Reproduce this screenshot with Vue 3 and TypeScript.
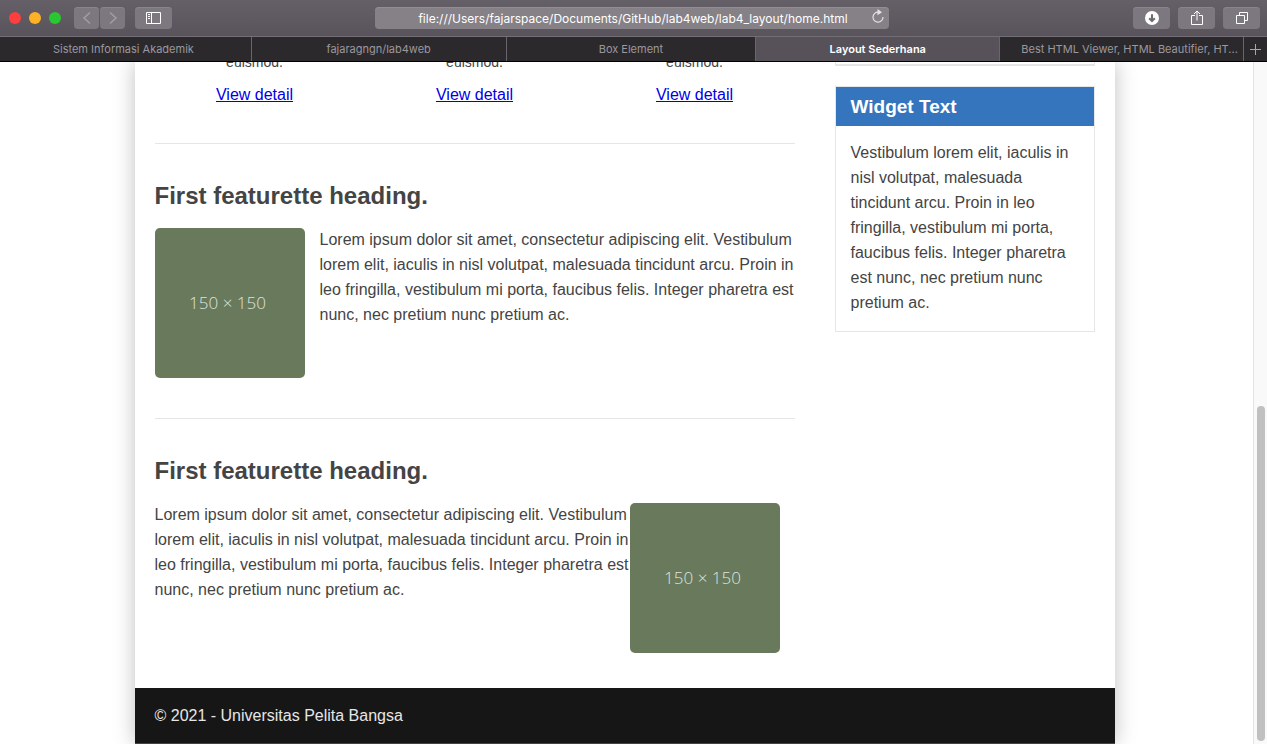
<script setup lang="ts">
import { ref } from 'vue'

const address = ref('file:///Users/fajarspace/Documents/GitHub/lab4web/lab4_layout/home.html')

const tabs: string[] = [
  'Sistem Informasi Akademik',
  'fajaragngn/lab4web',
  'Box Element',
  'Layout Sederhana',
  'Best HTML Viewer, HTML Beautifier, HT...',
]
const activeTab = ref(3)

const boxes: string[] = ['euismod.', 'euismod.', 'euismod.']

interface Featurette {
  title: string
  text: string
  imageRight: boolean
}

const lorem =
  'Lorem ipsum dolor sit amet, consectetur adipiscing elit. Vestibulum lorem elit, iaculis in nisl volutpat, malesuada tincidunt arcu. Proin in leo fringilla, vestibulum mi porta, faucibus felis. Integer pharetra est nunc, nec pretium nunc pretium ac.'

const featurettes: Featurette[] = [
  { title: 'First featurette heading.', text: lorem, imageRight: false },
  { title: 'First featurette heading.', text: lorem, imageRight: true },
]
</script>

<template>
  <div class="browser">
    <header class="toolbar">
      <div class="tools">
        <div class="lights">
          <button class="light close" aria-label="Close window"></button>
          <button class="light minimise" aria-label="Minimise window"></button>
          <button class="light zoom" aria-label="Zoom window"></button>
        </div>
        <div class="history">
          <button class="tool narrow" aria-label="Back">
            <svg width="10" height="14" viewBox="0 0 10 14"><path d="M8 1.5 2 7l6 5.500" /></svg>
          </button>
          <button class="tool narrow" aria-label="Forward">
            <svg width="10" height="14" viewBox="0 0 10 14"><path d="M2 1.5 8 7l-6 5.500" /></svg>
          </button>
        </div>
        <button class="tool" aria-label="Show sidebar">
          <svg width="15" height="12" viewBox="0 0 15 12">
            <path d="M.5.5h14v11H.5zM5.500.5v11M2 2.500h2M2 4.500h2M2 6.500h2" />
          </svg>
        </button>
      </div>

      <div class="address">
        <input v-model="address" type="text" aria-label="Address" spellcheck="false" />
        <button class="reload" aria-label="Reload page">
          <svg width="14" height="16" viewBox="0 0 14 16">
            <path d="M7.500 3.200A5 5 0 1 0 12 8" />
            <path class="solid" d="M6.500 0v6.200l4.500-3z" />
          </svg>
        </button>
      </div>

      <div class="tools end">
        <button class="tool" aria-label="Downloads">
          <svg width="14" height="14" viewBox="0 0 14 14">
            <circle class="disc" cx="7" cy="7" r="7" />
            <path class="arrow" d="M7 3.200v6.500M4.200 7.200 7 10l2.800-2.800" />
          </svg>
        </button>
        <button class="tool" aria-label="Share">
          <svg width="12" height="16" viewBox="0 0 12 16">
            <path d="M4 5.500H.5v9h11v-9H8M6 10.500V1.200M3 4l3-3 3 3" />
          </svg>
        </button>
        <button class="tool" aria-label="Show all tabs">
          <svg width="12" height="12" viewBox="0 0 12 12">
            <path d="M.5 3.500h8v8h-8zM3.500 3.500v-3h8v8h-3" />
          </svg>
        </button>
      </div>
    </header>

    <nav class="tabs" aria-label="Tabs">
      <button
        v-for="(tab, i) in tabs"
        :key="tab"
        class="tab"
        :class="{ active: i === activeTab }"
        @click="activeTab = i"
      >
        <span>{{ tab }}</span>
      </button>
      <button class="add" aria-label="New tab">
        <svg width="11" height="11" viewBox="0 0 11 11"><path d="M5.500 0v11M0 5.500h11" /></svg>
      </button>
    </nav>

    <div class="viewport">
      <div class="page">
        <div class="container">
          <div class="columns">
            <main class="main">
              <div class="boxes">
                <div v-for="(box, i) in boxes" :key="i" class="box">
                  <p>{{ box }}</p>
                  <a href="#">View detail</a>
                </div>
              </div>
              <template v-for="(item, i) in featurettes" :key="i">
                <hr />
                <article class="featurette">
                  <h2>{{ item.title }}</h2>
                  <div class="row" :class="{ reverse: item.imageRight }">
                    <div class="thumb" role="img" aria-label="150 × 150">150 × 150</div>
                    <p>{{ item.text }}</p>
                  </div>
                </article>
              </template>
            </main>

            <aside class="sidebar">
              <div class="widget previous"></div>
              <section class="widget">
                <h3>Widget Text</h3>
                <p>
                  Vestibulum lorem elit, iaculis in nisl volutpat, malesuada tincidunt arcu. Proin in
                  leo fringilla, vestibulum mi porta, faucibus felis. Integer pharetra est nunc, nec
                  pretium nunc pretium ac.
                </p>
              </section>
            </aside>
          </div>
          <footer class="footer">
            <p>© 2021 - Universitas Pelita Bangsa</p>
          </footer>
        </div>
      </div>
      <div class="scrollbar"><div class="thumb-bar"></div></div>
    </div>
  </div>
</template>

<style>
body {
  margin: 0;
}
</style>

<style scoped>
* {
  box-sizing: border-box;
}

.browser {
  display: flex;
  flex-direction: column;
  height: 100vh;
  overflow: hidden;
  background: #fff;
  font-family: Inter, 'Liberation Sans', sans-serif;
}

button {
  margin: 0;
  padding: 0;
  border: 0;
  font: inherit;
}

svg {
  display: block;
  fill: none;
  stroke: #fff;
}

/* Window toolbar */
.toolbar {
  display: grid;
  flex: none;
  grid-template-columns: 1fr minmax(0, 514px) 1fr;
  align-items: center;
  height: 36px;
  padding-right: 3px;
  background: linear-gradient(#655f67, #59545b);
}

.tools {
  display: flex;
  align-items: center;
  padding-left: 9px;
}

.tools.end {
  justify-content: flex-end;
  gap: 8px;
  padding: 0 4px 0 0;
}

.lights {
  display: flex;
  gap: 8px;
  margin-right: 13px;
}

.light {
  width: 12px;
  height: 12px;
  border-radius: 50%;
}

.close {
  background: #fc3f3f;
}

.minimise {
  background: #fdb125;
}

.zoom {
  background: #29c732;
}

.history {
  display: flex;
  gap: 1px;
  margin-right: 10px;
}

.tool {
  display: flex;
  align-items: center;
  justify-content: center;
  width: 37px;
  height: 22px;
  border-radius: 4px;
  background: #7d7880;
  box-shadow: inset 0 1px 0 #89848b;
}

.tool.narrow {
  width: 25px;
}

.narrow svg {
  stroke: #a29da4;
  stroke-width: 1.500;
}

.disc {
  fill: #fff;
  stroke: none;
}

.arrow {
  stroke: #6f6a71;
  stroke-width: 2;
}

.address {
  display: flex;
  align-items: center;
  height: 22px;
  padding: 0 4px 0 20px;
  border-radius: 4px;
  background: #858187;
  box-shadow: inset 0 1px 0 #918d93;
}

.address input {
  flex: 1;
  min-width: 0;
  padding: 2px 0 0;
  border: 0;
  outline: 0;
  background: none;
  color: #fff;
  font: 400 12px/20px Inter, 'Liberation Sans', sans-serif;
  text-align: center;
}

.reload {
  padding-bottom: 2px;
  background: none;
}

.reload svg {
  stroke: #e4e2e5;
  stroke-width: 1.200;
}

.reload .solid {
  fill: #e4e2e5;
  stroke: none;
}

/* Tab strip */
.tabs {
  display: flex;
  flex: none;
  height: 26px;
  border-top: 1px solid #736e75;
  border-bottom: 1px solid #000;
  background: #2c292d;
}

.tab {
  flex: 252 1 0;
  min-width: 0;
  border-right: 1px solid #69656b;
  background: #2c292d;
  color: #9b989c;
  font-size: 11px;
  line-height: 22px;
  text-align: center;
}

.tab:nth-child(2) {
  flex-grow: 255;
}

.tab:nth-child(3) {
  flex-grow: 250;
}

.tab:nth-child(4),
.tab:nth-child(5) {
  flex-grow: 244;
}

.tab span {
  display: block;
  overflow: hidden;
  padding: 0 8px;
  text-overflow: ellipsis;
  white-space: nowrap;
}

.tab:first-child span {
  padding: 0 12px 0 8px;
}

.tab:nth-child(5) span {
  padding: 0 4px 0 20px;
}

.tab.active {
  background: #57525a;
  color: #fff;
  font-weight: 600;
}

.add {
  display: flex;
  align-items: center;
  justify-content: center;
  width: 23px;
  background: #2c292d;
}

.add svg {
  stroke: #aaa7ab;
}

/* Web page */
.viewport {
  display: flex;
  flex: 1;
  min-height: 0;
  overflow: hidden;
}

.page {
  flex: 1;
  min-width: 0;
  padding-right: 4px;
  color: #444;
  font: 16px/25px 'Liberation Sans', Arial, sans-serif;
}

.container {
  display: flex;
  flex-direction: column;
  max-width: 980px;
  min-height: 100%;
  margin: 0 auto;
  background: #fff;
  box-shadow: 0 0 20px rgba(0, 0, 0, 0.25);
}

.columns {
  display: flex;
  flex: 1;
  gap: 40px;
  padding: 0 20px;
}

.main {
  flex: 1;
  min-width: 0;
}

.boxes {
  display: grid;
  grid-template-columns: repeat(3, 1fr);
  margin: -12px -10px 36px;
  text-align: center;
}

.box p {
  margin: 0 0 7px;
  font-size: 14px;
}

.box a {
  color: #0000e6;
}

hr {
  height: 1px;
  margin: 0;
  border: 0;
  background: #e6e6e6;
}

.featurette {
  padding: 39px 0 40px;
}

.featurette:last-child {
  padding-bottom: 35px;
}

h2 {
  margin: 0 0 19px;
  font-size: 24px;
  line-height: 25px;
}

.row {
  display: flex;
  gap: 15px;
}

.row.reverse {
  flex-direction: row-reverse;
  gap: 0;
  padding-right: 15px;
}

.row p {
  flex: 1;
  margin: 0;
}

.thumb {
  display: flex;
  flex: none;
  align-items: center;
  justify-content: center;
  width: 150px;
  height: 150px;
  margin-top: 1px;
  padding: 0 4px 2px 0;
  border-radius: 5px;
  background: #68795c;
  color: #dfe3dc;
  font-family: 'Open Sans', sans-serif;
  font-size: 17px;
  font-weight: 300;
}

.sidebar {
  width: 260px;
}

.widget {
  border: 1px solid #e6e6e6;
}

.widget.previous {
  height: 4px;
  margin-bottom: 20px;
  border-top: 0;
  border-bottom-width: 2px;
}

h3 {
  margin: 0;
  padding: 7px 15px;
  background: #3575be;
  color: #fff;
  font-size: 19px;
  line-height: 25px;
}

.widget p {
  margin: 0;
  padding: 14px 14px 16px 15px;
}

.footer {
  padding: 15px 20px;
  border-bottom: 1px solid #444;
  background: #161616;
  color: #e6e6e6;
}

.footer p {
  margin: 0;
}

.scrollbar {
  display: flex;
  flex-direction: column;
  justify-content: flex-end;
  align-items: center;
  width: 14px;
  padding-bottom: 3px;
  border-left: 1px solid #e4e4e4;
  background: #f9f9f9;
}

.thumb-bar {
  width: 8px;
  height: calc(50% - 4px);
  border-radius: 4px;
  background: #c0c0c0;
}
</style>
